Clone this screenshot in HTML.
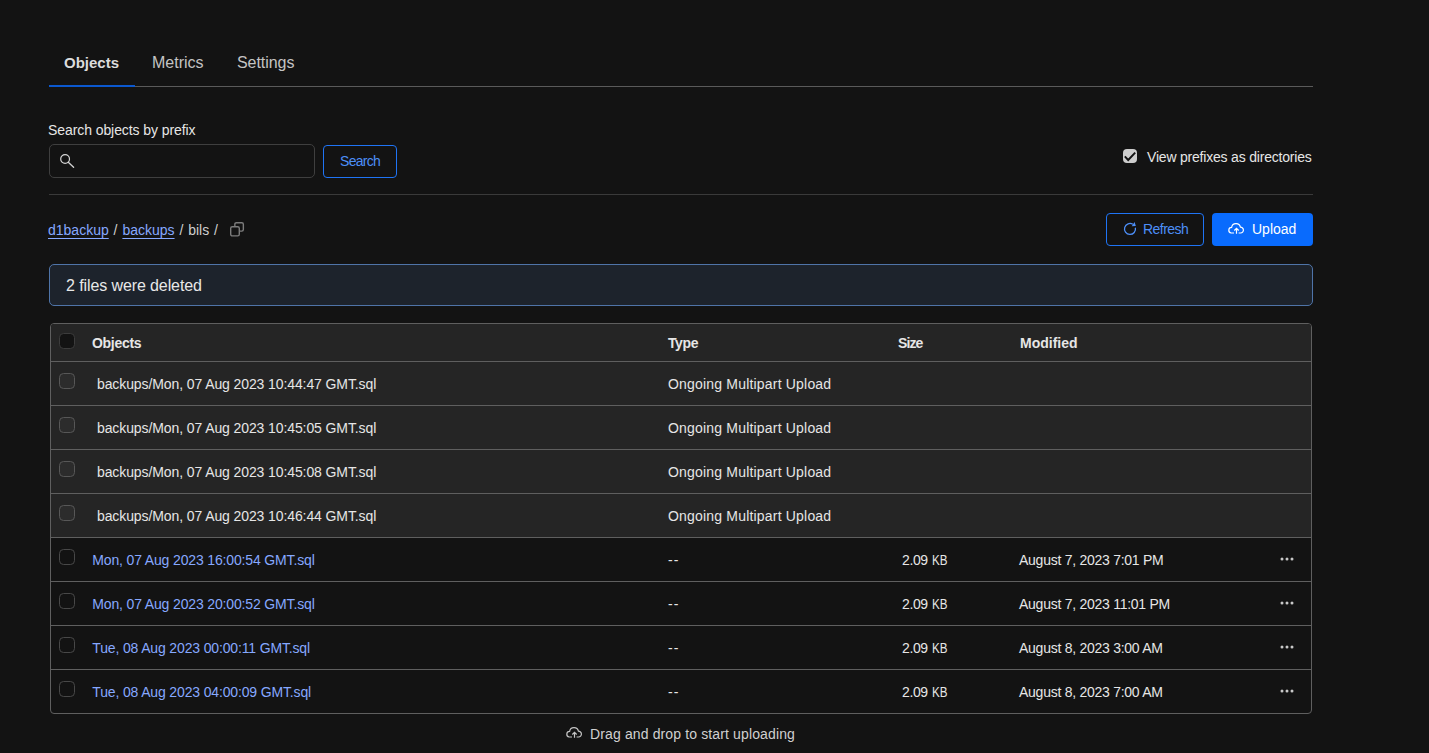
<!DOCTYPE html>
<html><head><meta charset="utf-8">
<style>
*{box-sizing:border-box;margin:0;padding:0}
html,body{width:1429px;height:753px;overflow:hidden;background:#131313;font-family:"Liberation Sans",sans-serif;color:#e8e8e8}
.abs{position:absolute}
.t{position:absolute;white-space:nowrap;line-height:1}
.tabs .t{font-size:16px;color:#c4c4c4}
.tabline{position:absolute;left:49px;top:86px;width:1264px;height:1px;background:#5a5a5a}
.tabsel{position:absolute;left:49px;top:85px;width:86px;height:2px;background:#0b58cf}
.divider{position:absolute;left:49px;top:194px;width:1264px;height:1px;background:#3a3a3a}
.input{position:absolute;left:49px;top:144px;width:266px;height:34px;border:1px solid #3f3f3f;border-radius:5px;background:#131313}
.btn-o{position:absolute;border:1px solid #1f74f5;border-radius:4px;color:#4d8ff8;font-size:14px}
.btn-p{position:absolute;background:#096bfd;border-radius:4px;color:#fff;font-size:14px}
.link{color:#86a8ff;text-decoration:underline;text-underline-offset:3px}
.alert{position:absolute;left:49px;top:264px;width:1264px;height:42px;border:1px solid #4f74a8;border-radius:5px;background:#1d232c}
.table{position:absolute;left:50px;top:323px;width:1262px;height:391px;border:1px solid #5f5f5f;border-radius:4px;overflow:hidden}
.row{position:absolute;left:0;width:1260px;height:44px;border-top:1px solid #5f5f5f}
.hdr{position:absolute;left:0;top:0;width:1260px;height:37px;background:#252525}
.mp{background:#252525}
.cb{position:absolute;left:8px;width:16px;height:16px;border:1px solid #575757;border-radius:4.5px;background:#2c2c2c}
.row .t{font-size:14px;color:#e6e6e6;top:15px}
.hdr .t{font-size:14px;font-weight:bold;color:#e6e6e6;top:11.5px}
.row .lk{color:#86a8ff;letter-spacing:-0.15px}
.dots{position:absolute;left:1229px;width:14px;height:4px}
</style></head>
<body>
<div class="tabs">
  <div class="t" style="left:64px;top:55px;font-weight:bold;color:#dcdcdc;font-size:15px">Objects</div>
  <div class="t" style="left:152px;top:55px">Metrics</div>
  <div class="t" style="left:237px;top:55px;letter-spacing:-0.05px">Settings</div>
</div>
<div class="tabline"></div>
<div class="tabsel"></div>

<div class="t" style="left:48px;top:123px;font-size:14px;color:#e6e6e6;letter-spacing:-0.08px">Search objects by prefix</div>
<div class="input">
  <svg class="abs" style="left:10px;top:9px" width="16" height="16" viewBox="0 0 16 16"><circle cx="5.1" cy="5" r="4.4" fill="none" stroke="#d4d4d4" stroke-width="1.2"/><path d="M8.3 8.3L13.6 13.2" stroke="#d4d4d4" stroke-width="1.3" stroke-linecap="round"/></svg>
</div>
<div class="btn-o" style="left:323px;top:145px;width:74px;height:33px">
  <div class="t" style="left:16px;top:8px;letter-spacing:-0.7px">Search</div>
</div>

<div class="abs" style="left:1123px;top:149px;width:14px;height:14px;background:#cdcdcd;border-radius:4px">
  <svg class="abs" style="left:0;top:0" width="14" height="14" viewBox="0 0 14 14"><path d="M1.8 7.4L5.2 11L12.2 3.7" fill="none" stroke="#111" stroke-width="1.9"/></svg>
</div>
<div class="t" style="left:1147px;top:150px;font-size:14px;color:#e6e6e6;letter-spacing:-0.2px">View prefixes as directories</div>

<div class="divider"></div>

<div class="t" style="left:48px;top:223px;font-size:14px;color:#cfcfcf;word-spacing:1px"><span class="link">d1backup</span> / <span class="link">backups</span> / bils /</div>
<svg class="abs" style="left:230px;top:222px" width="15" height="15" viewBox="0 0 15 15"><rect x="0.7" y="4.7" width="8.6" height="9.2" rx="1.6" fill="none" stroke="#7c7c7c" stroke-width="1.4"/><path d="M4.85 4.2V2.2c0-.9.6-1.5 1.5-1.5h5.5c.9 0 1.5.6 1.5 1.5v5.4c0 .9-.6 1.5-1.5 1.5H9.9" fill="none" stroke="#7c7c7c" stroke-width="1.4"/></svg>

<div class="btn-o" style="left:1106px;top:213px;width:98px;height:33px">
  <svg class="abs" style="left:15px;top:7px" width="16" height="16" viewBox="0 0 16 16"><path d="M13.36 6.76A5.5 5.5 0 1 1 10.9 3.3" fill="none" stroke="#4d8ff8" stroke-width="1.3"/><path d="M12.6 0.9L13.8 4.9L9.7 5.3Z" fill="#4d8ff8"/></svg>
  <div class="t" style="left:36px;top:8px;letter-spacing:-0.55px">Refresh</div>
</div>
<div class="btn-p" style="left:1212px;top:213px;width:101px;height:33px">
  <svg class="abs" style="left:15px;top:8px" width="18" height="14" viewBox="0 0 18 14"><path d="M7 12H4.2A2.8 2.8 0 0 1 4.6 6.43A4.5 4.5 0 0 1 13.43 6.22A2.8 2.8 0 0 1 13.6 12H11.6" fill="none" stroke="#fff" stroke-width="1.2"/><path d="M9.5 12.8V7.3M7.3 9.5L9.5 7.3L11.7 9.5" fill="none" stroke="#fff" stroke-width="1.2"/></svg>
  <div class="t" style="left:40px;top:9px">Upload</div>
</div>

<div class="alert">
  <div class="t" style="left:16px;top:13px;font-size:16px;color:#e8e8e8;letter-spacing:-0.1px">2 files were deleted</div>
</div>

<div class="table">
  <div class="hdr">
    <div class="cb" style="top:9px;background:#131313;border-color:#3c3c3c"></div>
    <div class="t" style="left:41px;letter-spacing:-0.3px">Objects</div>
    <div class="t" style="left:617px;letter-spacing:-0.4px">Type</div>
    <div class="t" style="left:847px;letter-spacing:-0.9px">Size</div>
    <div class="t" style="left:969px">Modified</div>
  </div>
  <div class="row mp" style="top:37px">
    <div class="cb" style="top:11px"></div>
    <div class="t" style="left:46px;letter-spacing:-0.1px">backups/Mon, 07 Aug 2023 10:44:47 GMT.sql</div>
    <div class="t" style="left:617px;letter-spacing:0.19px">Ongoing Multipart Upload</div>
  </div>
  <div class="row mp" style="top:81px">
    <div class="cb" style="top:11px"></div>
    <div class="t" style="left:46px;letter-spacing:-0.1px">backups/Mon, 07 Aug 2023 10:45:05 GMT.sql</div>
    <div class="t" style="left:617px;letter-spacing:0.19px">Ongoing Multipart Upload</div>
  </div>
  <div class="row mp" style="top:125px">
    <div class="cb" style="top:11px"></div>
    <div class="t" style="left:46px;letter-spacing:-0.1px">backups/Mon, 07 Aug 2023 10:45:08 GMT.sql</div>
    <div class="t" style="left:617px;letter-spacing:0.19px">Ongoing Multipart Upload</div>
  </div>
  <div class="row mp" style="top:169px">
    <div class="cb" style="top:11px"></div>
    <div class="t" style="left:46px;letter-spacing:-0.1px">backups/Mon, 07 Aug 2023 10:46:44 GMT.sql</div>
    <div class="t" style="left:617px;letter-spacing:0.19px">Ongoing Multipart Upload</div>
  </div>
  <div class="row" style="top:213px">
    <div class="cb" style="top:11px;background:#131313;border-color:#484848"></div>
    <div class="t lk" style="left:41.3px">Mon, 07 Aug 2023 16:00:54 GMT.sql</div>
    <div class="t" style="left:617px;letter-spacing:1.2px">--</div>
    <div class="t" style="left:851px;letter-spacing:-0.4px">2.09</div>
    <div class="t" style="left:880.5px;transform:scaleX(0.83);transform-origin:0 0">KB</div>
    <div class="t" style="left:968px;letter-spacing:-0.26px">August 7, 2023 7:01 PM</div>
    <svg class="dots" style="top:19px" viewBox="0 0 14 4"><circle cx="2" cy="2" r="1.5" fill="#c8c8c8"/><circle cx="7" cy="2" r="1.5" fill="#c8c8c8"/><circle cx="12" cy="2" r="1.5" fill="#c8c8c8"/></svg>
  </div>
  <div class="row" style="top:257px">
    <div class="cb" style="top:11px;background:#131313;border-color:#484848"></div>
    <div class="t lk" style="left:41.3px">Mon, 07 Aug 2023 20:00:52 GMT.sql</div>
    <div class="t" style="left:617px;letter-spacing:1.2px">--</div>
    <div class="t" style="left:851px;letter-spacing:-0.4px">2.09</div>
    <div class="t" style="left:880.5px;transform:scaleX(0.83);transform-origin:0 0">KB</div>
    <div class="t" style="left:968px;letter-spacing:-0.26px">August 7, 2023 11:01 PM</div>
    <svg class="dots" style="top:19px" viewBox="0 0 14 4"><circle cx="2" cy="2" r="1.5" fill="#c8c8c8"/><circle cx="7" cy="2" r="1.5" fill="#c8c8c8"/><circle cx="12" cy="2" r="1.5" fill="#c8c8c8"/></svg>
  </div>
  <div class="row" style="top:301px">
    <div class="cb" style="top:11px;background:#131313;border-color:#484848"></div>
    <div class="t lk" style="left:41.3px">Tue, 08 Aug 2023 00:00:11 GMT.sql</div>
    <div class="t" style="left:617px;letter-spacing:1.2px">--</div>
    <div class="t" style="left:851px;letter-spacing:-0.4px">2.09</div>
    <div class="t" style="left:880.5px;transform:scaleX(0.83);transform-origin:0 0">KB</div>
    <div class="t" style="left:968px;letter-spacing:-0.26px">August 8, 2023 3:00 AM</div>
    <svg class="dots" style="top:19px" viewBox="0 0 14 4"><circle cx="2" cy="2" r="1.5" fill="#c8c8c8"/><circle cx="7" cy="2" r="1.5" fill="#c8c8c8"/><circle cx="12" cy="2" r="1.5" fill="#c8c8c8"/></svg>
  </div>
  <div class="row" style="top:345px">
    <div class="cb" style="top:11px;background:#131313;border-color:#484848"></div>
    <div class="t lk" style="left:41.3px">Tue, 08 Aug 2023 04:00:09 GMT.sql</div>
    <div class="t" style="left:617px;letter-spacing:1.2px">--</div>
    <div class="t" style="left:851px;letter-spacing:-0.4px">2.09</div>
    <div class="t" style="left:880.5px;transform:scaleX(0.83);transform-origin:0 0">KB</div>
    <div class="t" style="left:968px;letter-spacing:-0.26px">August 8, 2023 7:00 AM</div>
    <svg class="dots" style="top:19px" viewBox="0 0 14 4"><circle cx="2" cy="2" r="1.5" fill="#c8c8c8"/><circle cx="7" cy="2" r="1.5" fill="#c8c8c8"/><circle cx="12" cy="2" r="1.5" fill="#c8c8c8"/></svg>
  </div>
</div>

<svg class="abs" style="left:565px;top:725px" width="18" height="14" viewBox="0 0 18 14"><path d="M7 12H4.2A2.8 2.8 0 0 1 4.6 6.43A4.5 4.5 0 0 1 13.43 6.22A2.8 2.8 0 0 1 13.6 12H11.6" fill="none" stroke="#c4c4c4" stroke-width="1.2"/><path d="M9.5 12.8V7.3M7.3 9.5L9.5 7.3L11.7 9.5" fill="none" stroke="#c4c4c4" stroke-width="1.2"/></svg>
<div class="t" style="left:590px;top:727px;font-size:14px;color:#d0d0d0;letter-spacing:0.13px">Drag and drop to start uploading</div>
</body></html>
